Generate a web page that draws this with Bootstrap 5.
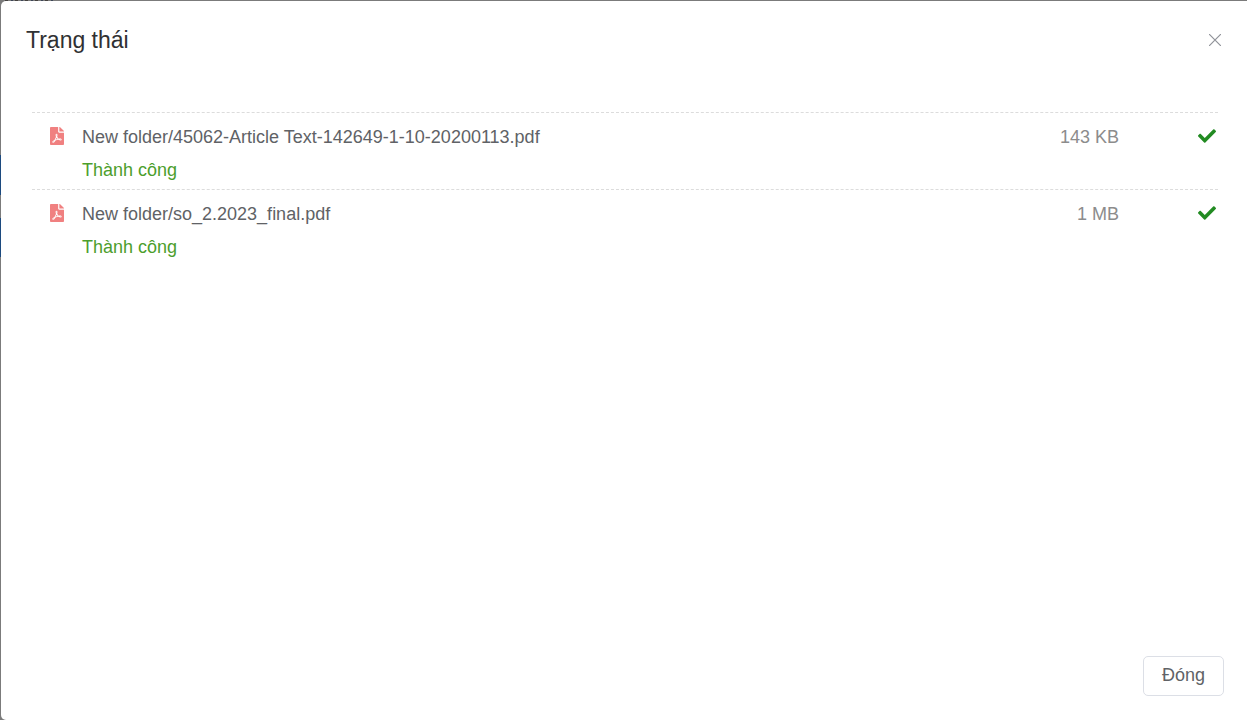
<!DOCTYPE html>
<html lang="vi">
<head>
<meta charset="utf-8">
<meta name="viewport" content="width=device-width, initial-scale=1">
<title>Trạng thái</title>
<link href="https://cdn.jsdelivr.net/npm/bootstrap@5.3.0/dist/css/bootstrap.min.css" rel="stylesheet">
<style>
  body {
    font-family: "Liberation Sans", Arial, sans-serif;
    font-size: 18px;
    line-height: 24px;
    color: #606266;
    /* dimmed page behind the dialog: the edge of a text line on top, two blue side items */
    background:
      repeating-linear-gradient(90deg, #44413f 0 3px, #7b7b7b 3px 6px, #3d4658 6px 8px, #7b7b7b 8px 10px) 5px 0 / 50px 1px no-repeat,
      linear-gradient(#7b7b7b 155px, #1c4a7f 155px 195px, #7b7b7b 195px 218px, #1c4a7f 218px 257px, #7b7b7b 257px);
    padding: 1px 0 0 1px;
  }
  .status-dialog { border-radius: 5px 0 0 5px; }
  .status-header { padding: 24px 26px 0 25px; }
  .status-title { font-size: 23px; line-height: 30px; color: #303133; font-weight: 400; }
  .close-btn { color: #909399; line-height: 0; }
  .status-body { padding: 57px 29px 0 31px; }
  .upload-item { border-top: 1px dashed #dcdcdc; padding: 12px 2px 7px 18px; }
  .file-icon { width: 32px; padding-bottom: 2px; }
  .file-size { color: #8c8c8c; }
  .check-cell { width: 97px; padding-bottom: 2px; }
  .result-text { color: #4c9e2c; padding: 9px 0 0 32px; }
  .status-footer { padding: 0 23px 24px; }
  .close-action { color: #606266; font-size: 18px; line-height: 24px; border: 1px solid #dcdfe6; border-radius: 5px; padding: 6px 18px 8px; }
  .close-action:hover { border-color: #a0a4ad; }
</style>
</head>
<body class="min-vh-100 d-flex flex-column">
<svg class="d-none" aria-hidden="true">
  <symbol id="icon-pdf" viewBox="0 0 384 512" preserveAspectRatio="none"><path d="M181.9 256.100c-5-16-4.900-46.900-2-46.900 8.400 0 7.600 36.900 2 46.900zm-1.700 47.200c-7.700 20.200-17.300 43.300-28.400 62.700 18.300-7 39-17.200 62.900-21.900-12.700-9.600-24.900-23.400-34.500-40.800zM86.100 428.100c0 .8 13.200-5.400 34.900-40.200-6.700 6.300-29.100 24.500-34.900 40.200zM248 160h136v328c0 13.300-10.700 24-24 24H24c-13.300 0-24-10.700-24-24V24C0 10.700 10.700 0 24 0h200v136c0 13.200 10.800 24 24 24zm-8 171.800c-20-12.200-33.300-29-42.700-53.800 4.500-18.500 11.600-46.600 6.200-64.200-4.700-29.400-42.400-26.500-47.800-6.800-5 18.300-.4 44.100 8.100 77-11.600 27.600-28.700 64.600-40.800 85.800-.1 0-.1.1-.2.1-27.100 13.900-73.600 44.500-54.500 68 5.600 6.900 16 10 21.500 10 17.900 0 35.700-18 61.100-61.800 25.800-8.500 54.100-19.100 79-23.200 21.700 11.800 47.100 19.500 64 19.500 29.200 0 31.200-32 19.700-43.400-13.900-13.600-54.300-9.700-73.600-7.200zM377 105L279 7c-4.500-4.500-10.600-7-17-7h-6v128h128v-6.100c0-6.300-2.500-12.400-7-16.900zm-74.100 255.300c4.100-2.700-2.500-11.900-42.800-9 37.100 15.800 42.800 9 42.800 9z"/></symbol>
  <symbol id="icon-check" viewBox="0 65 512 382"><path d="M173.898 439.404l-166.400-166.400c-9.997-9.997-9.997-26.206 0-36.204l36.203-36.204c9.997-9.998 26.207-9.998 36.204 0L192 312.690 432.095 72.596c9.997-9.997 26.207-9.997 36.204 0l36.203 36.204c9.997 9.997 9.997 26.206 0 36.204l-294.400 294.401c-9.998 9.997-26.207 9.997-36.204-.001z"/></symbol>
</svg>
<main class="status-dialog bg-white flex-grow-1 d-flex flex-column" role="dialog" aria-labelledby="dialog-title">
  <header class="status-header d-flex justify-content-between align-items-center">
    <h1 class="status-title m-0" id="dialog-title">Trạng thái</h1>
    <button type="button" class="close-btn border-0 bg-transparent p-0" aria-label="Đóng hộp thoại">
      <svg width="12" height="12" viewBox="0 0 12 12" fill="none" stroke="currentColor" stroke-width="1.2"><path d="M0 0l12 12M12 0L0 12"/></svg>
    </button>
  </header>
  <section class="status-body flex-grow-1">
    <ul class="list-unstyled m-0">
      <li class="upload-item">
        <div class="d-flex align-items-center">
          <span class="file-icon d-flex"><svg width="14" height="18" fill="#f08080" aria-hidden="true"><use href="#icon-pdf"/></svg></span>
          <span class="flex-grow-1">New folder/45062-Article Text-142649-1-10-20200113.pdf</span>
          <span class="file-size">143 KB</span>
          <span class="check-cell d-flex justify-content-end"><svg width="18" height="14" fill="#228b22" role="img" aria-label="Hoàn tất"><use href="#icon-check"/></svg></span>
        </div>
        <div class="result-text">Thành công</div>
      </li>
      <li class="upload-item">
        <div class="d-flex align-items-center">
          <span class="file-icon d-flex"><svg width="14" height="18" fill="#f08080" aria-hidden="true"><use href="#icon-pdf"/></svg></span>
          <span class="flex-grow-1">New folder/so_2.2023_final.pdf</span>
          <span class="file-size">1 MB</span>
          <span class="check-cell d-flex justify-content-end"><svg width="18" height="14" fill="#228b22" role="img" aria-label="Hoàn tất"><use href="#icon-check"/></svg></span>
        </div>
        <div class="result-text">Thành công</div>
      </li>
    </ul>
  </section>
  <footer class="status-footer d-flex justify-content-end">
    <button type="button" class="close-action bg-white">Đóng</button>
  </footer>
</main>
<script src="https://cdn.jsdelivr.net/npm/bootstrap@5.3.0/dist/js/bootstrap.bundle.min.js"></script>
</body>
</html>
